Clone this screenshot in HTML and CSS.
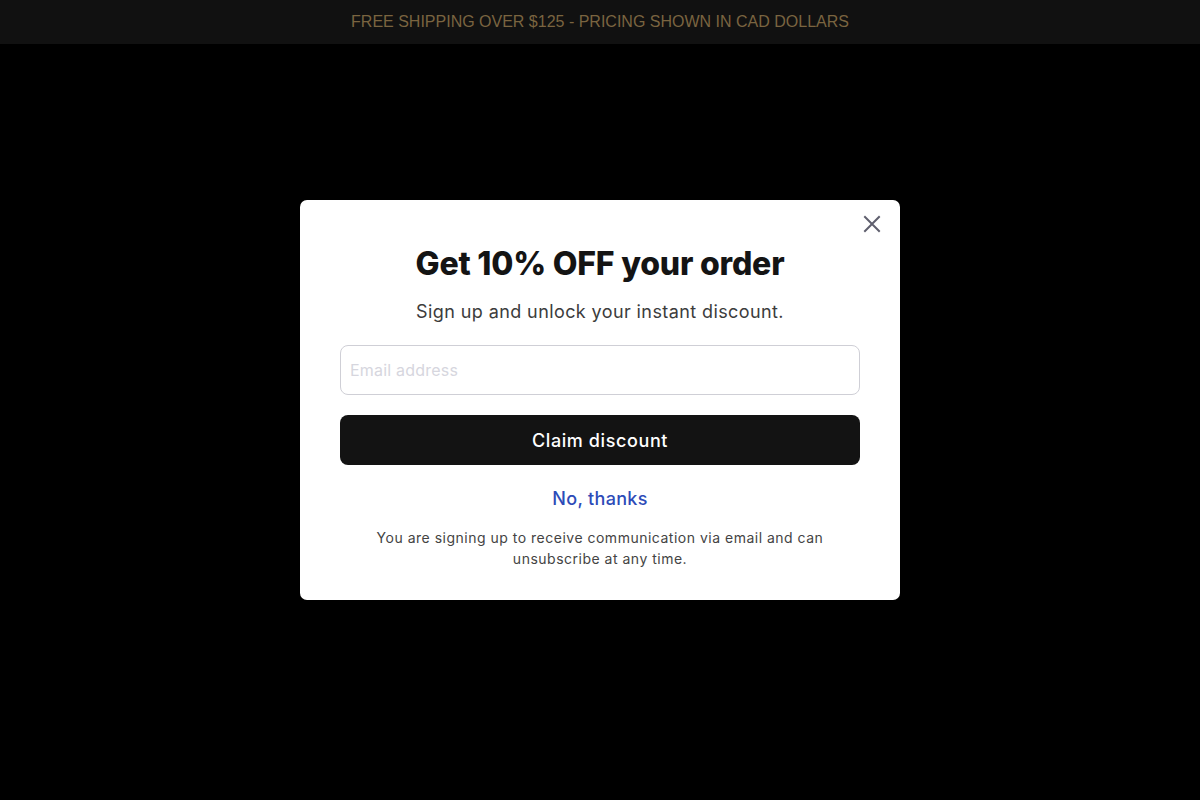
FILE: index.html
```html
<!DOCTYPE html>
<html lang="en">
<head>
<meta charset="utf-8">
<title>Get 10% OFF</title>
<link rel="stylesheet" href="styles.css">
</head>
<body>
<div class="announcement">FREE SHIPPING OVER $125 - PRICING SHOWN IN CAD DOLLARS</div>
<main class="page"></main>
<div class="overlay">
  <div class="modal" role="dialog" aria-label="Get 10% OFF your order">
    <button class="close" aria-label="Close">
      <svg width="20" height="20" viewBox="0 0 20 20" fill="none" stroke="#5f5f6e" stroke-width="2" stroke-linecap="square">
        <path d="M3 3L17 17M17 3L3 17"/>
      </svg>
    </button>
    <h1 class="title">Get 10% OFF your order</h1>
    <p class="subtitle">Sign up and unlock your instant discount.</p>
    <input class="email" type="email" placeholder="Email address">
    <button class="claim">Claim discount</button>
    <a class="decline" href="#">No, thanks</a>
    <p class="legal">You are signing up to receive communication via email and can unsubscribe at any time.</p>
  </div>
</div>
</body>
</html>
```
FILE: styles.css
```css
html, body {
  margin: 0;
  padding: 0;
  background: #000;
  height: 100%;
}
.announcement {
  height: 44px;
  background: #111111;
  color: #7a6440;
  font-family: "Liberation Sans", Arial, sans-serif;
  font-size: 16px;
  display: flex;
  align-items: center;
  justify-content: center;
}
.overlay {
  position: fixed;
  inset: 0;
  display: flex;
  align-items: center;
  justify-content: center;
}
.modal {
  position: relative;
  width: 600px;
  height: 400px;
  box-sizing: border-box;
  background: #fff;
  border-radius: 7px;
  padding: 40px 40px 0;
  display: flex;
  flex-direction: column;
  align-items: stretch;
  font-family: "Inter", "Noto Sans", sans-serif;
  text-align: center;
}
.close {
  position: absolute;
  top: 14px;
  right: 18px;
  width: 20px;
  height: 20px;
  padding: 0;
  border: 0;
  background: none;
  cursor: pointer;
}
.close svg { display: block; }
.title {
  margin: 0;
  font-size: 32px;
  line-height: 48px;
  font-weight: 800;
  color: #141414;
  letter-spacing: -0.2px;
}
.subtitle {
  margin: 10px 0 0;
  font-size: 18px;
  line-height: 27px;
  color: #3c3c3c;
  font-weight: 400;
  letter-spacing: 0.4px;
}
.email {
  margin-top: 20px;
  height: 50px;
  box-sizing: border-box;
  border: 1px solid #cfcfd6;
  border-radius: 8px;
  padding: 0 9px;
  font-family: inherit;
  font-size: 16px;
  letter-spacing: 0.2px;
  color: #222;
  outline: none;
}
.email::placeholder { color: #d6d6de; }
.claim {
  margin-top: 20px;
  height: 50px;
  border: 0;
  border-radius: 8px;
  background: #131313;
  color: #fff;
  font-family: inherit;
  font-size: 18px;
  font-weight: 500;
  letter-spacing: 0.6px;
  cursor: pointer;
}
.decline {
  margin-top: 20px;
  align-self: center;
  font-size: 18px;
  line-height: 27px;
  font-weight: 500;
  letter-spacing: 0.3px;
  color: #2d4bb8;
  text-decoration: none;
}
.legal {
  margin: 15px auto 0;
  width: 480px;
  font-size: 14px;
  line-height: 21px;
  color: #444;
  letter-spacing: 0.5px;
}
```
